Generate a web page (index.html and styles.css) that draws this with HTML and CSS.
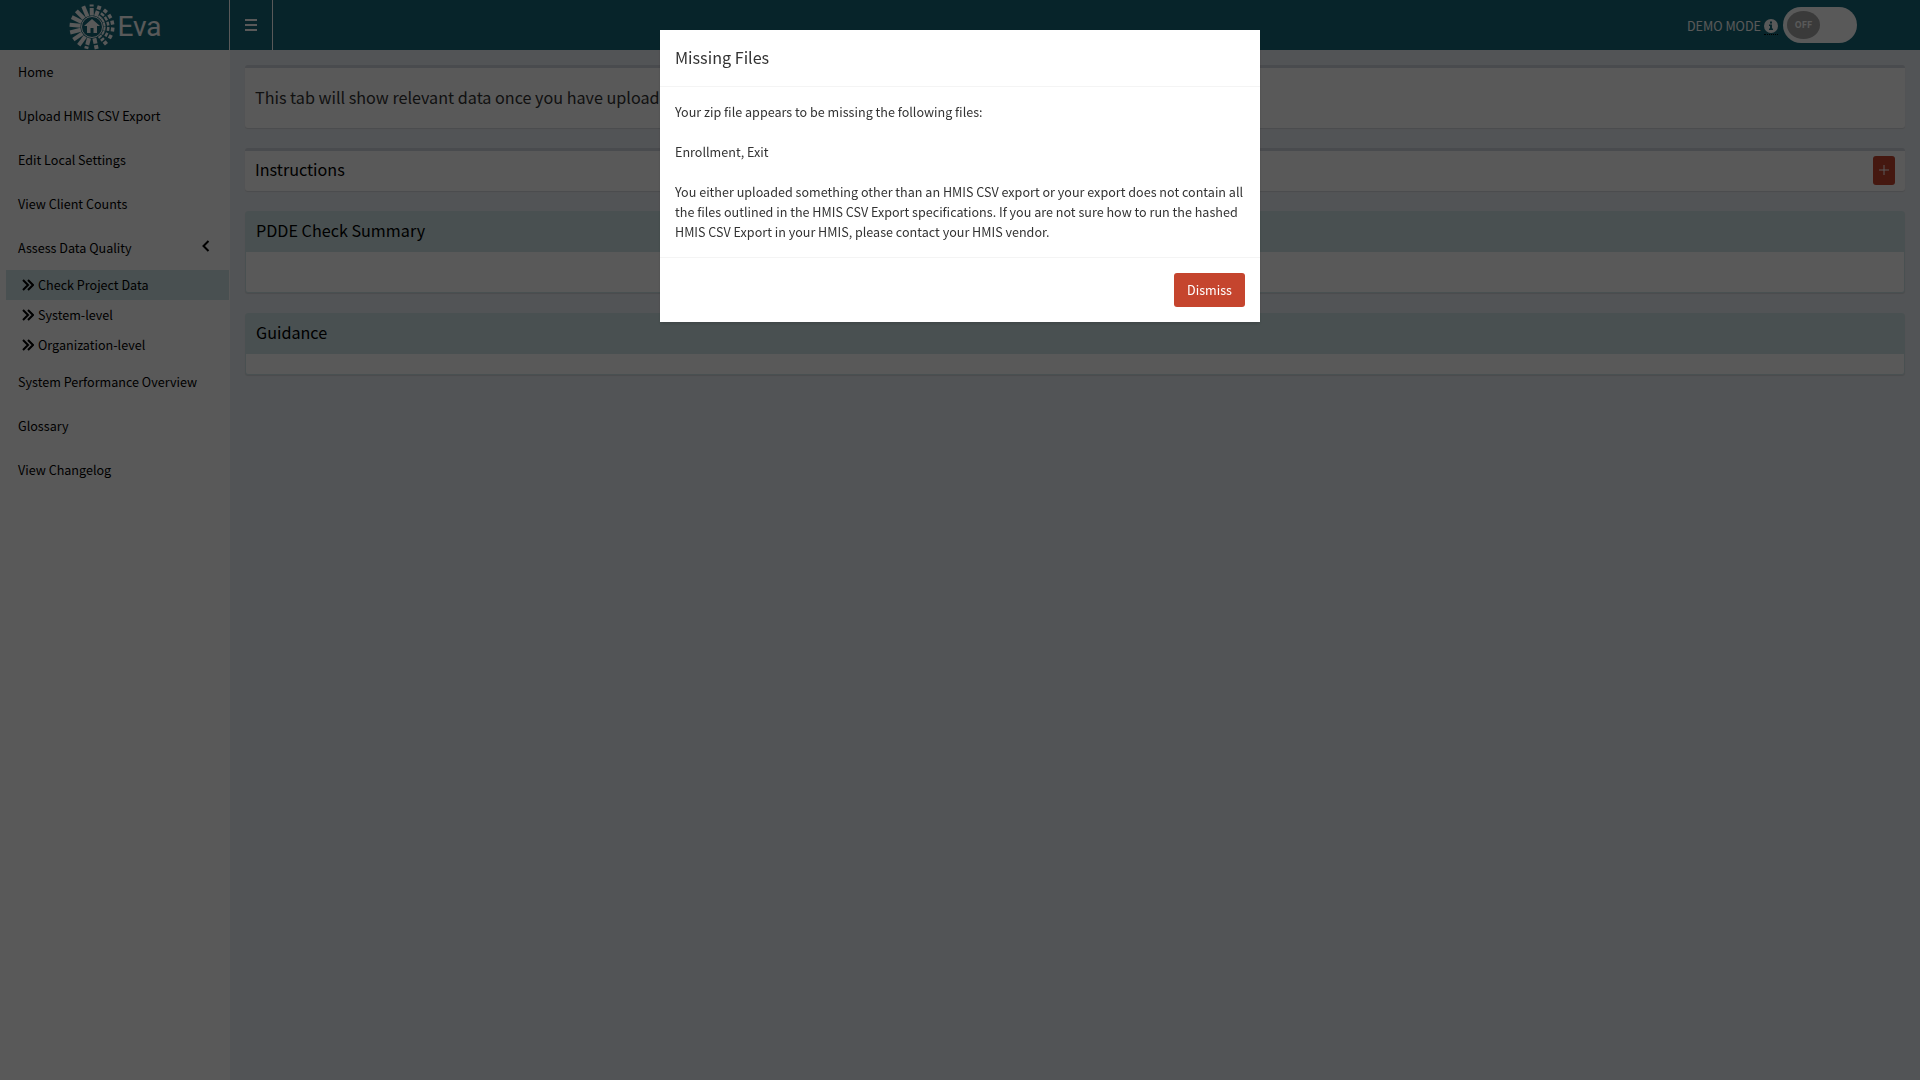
FILE: index.html
```html
<!DOCTYPE html>
<html lang="en">
<head>
<meta charset="utf-8">
<title>Eva</title>
<link rel="stylesheet" href="styles.css">
</head>
<body>
<header class="topbar">
  <a class="logo" href="#">
    <svg class="logo-mark" viewBox="-23 -23 46 46" aria-hidden="true">
      <g fill="none" stroke="currentColor" stroke-width="4">
        <path d="M-11.5 0H-22.500" transform="rotate(6)"/>
        <path d="M-11.5 0H-22.500" transform="rotate(-14)"/>
        <path d="M-11.5 0H-22.500" transform="rotate(-34)"/>
        <path d="M-11.5 0H-22.500" transform="rotate(-54)"/>
        <path d="M-11.5 0H-22.500" transform="rotate(26)"/>
        <path d="M-11.5 0H-22.500" transform="rotate(46)"/>
        <path d="M-11.5 0H-22.500" transform="rotate(67)"/>
        <path d="M-11.5 0H-19M-20.500 0H-22.500" transform="rotate(89)"/>
        <path d="M-11.5 0H-18.500M-20 0H-22.500" transform="rotate(-75)"/>
        <path d="M11.5 0H17M18.500 0H22.500" transform="rotate(-70)"/>
        <path d="M11.5 0H13.500M15 0H17.500M19 0H22.500" transform="rotate(-50)"/>
        <path d="M11.5 0H13.500M15 0H17.500M19 0H22.500" transform="rotate(-31)"/>
        <path d="M11.5 0H13.500M15 0H17.500M19 0H22.500" transform="rotate(-12)"/>
        <path d="M11.5 0H13.500M15 0H17.500M19 0H22.500" transform="rotate(7)"/>
        <path d="M11.5 0H13.500M15 0H17.500M19 0H22.500" transform="rotate(28)"/>
        <path d="M11.5 0H13.500M15 0H17.500M19 0H22.500" transform="rotate(50)"/>
        <path d="M11.5 0H17M18.500 0H22.500" transform="rotate(78)"/>
      </g>
      <circle r="10.5" fill="none" stroke="currentColor" stroke-width="1"/>
      <path fill="currentColor" d="M0-8L8-1H5V6H1.500V1H-1.500V6H-5V-1H-8Z"/>
    </svg>
    <span class="logo-text">Eva</span>
  </a>
  <button class="menu-toggle" type="button" aria-label="Toggle navigation">
    <svg viewBox="0 0 12 12" aria-hidden="true"><path d="M0 1H12M0 6H12M0 11H12" stroke="currentColor" stroke-width="2"/></svg>
  </button>
  <label class="demo">
    <span class="demo-text">DEMO MODE</span>
    <span class="info"><svg viewBox="0 0 14 14" aria-hidden="true"><circle cx="7" cy="7" r="7" fill="currentColor"/><path class="info-i" d="M6 2.500h2v2H6zM5 5.500h3v4h1v1.500H5V9.500h1V7H5z"/></svg></span>
    <span class="switch"><input type="checkbox" class="switch-input"><span class="knob">OFF</span></span>
  </label>
</header>
<div class="layout">
  <nav class="sidebar">
    <a class="item" href="#">Home</a>
    <a class="item" href="#">Upload HMIS CSV Export</a>
    <a class="item" href="#">Edit Local Settings</a>
    <a class="item" href="#">View Client Counts</a>
    <a class="item" href="#">Assess Data Quality
      <svg class="chevron" viewBox="0 0 8 12" aria-hidden="true"><path d="M6.500 1L1.500 6L6.500 11" fill="none" stroke="currentColor" stroke-width="2"/></svg></a>
    <div class="submenu">
      <a class="subitem active" href="#"><svg class="angles" viewBox="0 0 12 12" aria-hidden="true"><path d="M1 1L6 6L1 11M6 1L11 6L6 11" fill="none" stroke="currentColor" stroke-width="2"/></svg>Check Project Data</a>
      <a class="subitem" href="#"><svg class="angles" viewBox="0 0 12 12" aria-hidden="true"><path d="M1 1L6 6L1 11M6 1L11 6L6 11" fill="none" stroke="currentColor" stroke-width="2"/></svg>System-level</a>
      <a class="subitem" href="#"><svg class="angles" viewBox="0 0 12 12" aria-hidden="true"><path d="M1 1L6 6L1 11M6 1L11 6L6 11" fill="none" stroke="currentColor" stroke-width="2"/></svg>Organization-level</a>
    </div>
    <a class="item" href="#">System Performance Overview</a>
    <a class="item" href="#">Glossary</a>
    <a class="item" href="#">View Changelog</a>
  </nav>
  <main class="content">
    <section class="box notice"><p>This tab will show relevant data once you have uploaded your HMIS CSV Export.</p></section>
    <section class="box"><div class="box-header"><h3>Instructions</h3><button class="expand" type="button" aria-label="Expand"><svg viewBox="0 0 10 10" aria-hidden="true"><path d="M5 0V10M0 5H10" stroke="currentColor" stroke-width="1"/></svg></button></div></section>
    <section class="box solid"><div class="box-header"><h3>PDDE Check Summary</h3></div><div class="box-body tall"></div></section>
    <section class="box solid"><div class="box-header"><h3>Guidance</h3></div><div class="box-body"></div></section>
  </main>
</div>
<div class="backdrop">
  <div class="modal" role="dialog" aria-modal="true" aria-labelledby="modal-title">
    <div class="modal-header"><h4 id="modal-title">Missing Files</h4></div>
    <div class="modal-body">
      <p>Your zip file appears to be missing the following files:</p>
      <p>Enrollment, Exit</p>
      <p>You either uploaded something other than an HMIS CSV export or your export does not contain all the files outlined in the HMIS CSV Export specifications. If you are not sure how to run the hashed HMIS CSV Export in your HMIS, please contact your HMIS vendor.</p>
    </div>
    <div class="modal-footer"><button class="dismiss" type="button">Dismiss</button></div>
  </div>
</div>
</body>
</html>
```
FILE: styles.css
```css
* { box-sizing: border-box; }
body {
  margin: 0;
  min-height: 100vh;
  display: flex;
  flex-direction: column;
  background: #ecf0f5;
  color: #333;
  font: 14px/20px "Source Sans Pro", "Noto Sans CJK SC", sans-serif;
  /* x-height ratio of Source Sans, so the fallback face sets at the same size */
  font-size-adjust: 0.488;
}
h3, h4, p { margin: 0; font-weight: 400; }
a { color: inherit; text-decoration: none; }
button { font: inherit; font-size-adjust: inherit; border: 0; padding: 0; cursor: pointer; }
svg { display: block; }

.topbar { display: flex; height: 50px; background: #16697a; color: #fff; }
.logo {
  display: flex; align-items: center; justify-content: center; gap: 2px;
  width: 230px; padding-left: 2px; border-right: 1px solid #fff;
}
.logo-mark { width: 46px; height: 46px; margin-top: 3px; }
.logo-text { padding-top: 3px; font: 400 28px/50px Roboto, sans-serif; font-size-adjust: none; }
.menu-toggle {
  display: grid; place-items: center; width: 43px;
  background: none; color: #fff; border-right: 1px solid #fff;
}
.menu-toggle svg { width: 12px; height: 12px; }
.demo { display: flex; align-items: center; margin-left: auto; padding-right: 63px; }
.demo-text { padding-top: 2px; }
.info { margin: 2px 5px 0 3px; padding: 1px 0; border-bottom: 1px dotted #000; }
.info svg { width: 14px; height: 14px; }
.info-i { fill: #16697a; }
.switch {
  display: flex; align-items: center; width: 74px; height: 36px;
  padding: 4px; border-radius: 18px; background: #fff;
}
.switch-input { appearance: none; width: 0; height: 0; margin: 0; }
.knob {
  width: 33px; height: 28px; border-radius: 50%; background: #a5a5a5;
  color: #fff; font-size: 10px; font-weight: 700; line-height: 28px; text-align: center;
}

.layout { display: flex; flex: 1; }
.sidebar { width: 230px; flex: none; background: #fff; color: #000; }
.item {
  display: flex; align-items: center; justify-content: space-between;
  height: 44px; padding: 0 20px 0 18px;
}
.chevron { width: 8px; height: 12px; margin-bottom: 4px; }
.submenu { padding: 0 1px 0 6px; }
.subitem { display: flex; align-items: center; gap: 4px; height: 30px; padding-left: 16px; }
.subitem.active { background: #d0e6e8; }
.angles { width: 12px; height: 12px; }

.content { flex: 1; display: flex; flex-direction: column; gap: 20px; padding: 15px; }
.box {
  background: #fff; border-top: 3px solid #d2d6de; border-radius: 3px;
  box-shadow: 0 1px 1px rgba(0, 0, 0, 0.1); font-size: 18px;
}
.notice { padding: 19px 10px 21px; }
.box-header {
  display: flex; align-items: center; justify-content: space-between;
  height: 40px; padding: 0 10px 2px; color: #000;
}
.box-header h3 { padding-bottom: 2px; font-size: 18px; }
.expand {
  display: grid; place-items: center; width: 22px; height: 29px;
  border-radius: 3px; background: #c5452e; color: #fff;
}
.expand svg { width: 10px; height: 10px; }
.solid { border: 1px solid #d0e6e8; }
.solid .box-header { background: #d0e6e8; }
.box-body { height: 20px; }
.tall { height: 40px; }

.backdrop { position: fixed; inset: 0; padding: 30px 20px; background: rgba(0, 0, 0, 0.65); }
.modal {
  max-width: 600px; margin: 0 auto; background: #fff;
  box-shadow: 0 2px 3px rgba(0, 0, 0, 0.125);
}
.modal-header { padding: 15px 15px 17px; border-bottom: 1px solid #f4f4f4; }
.modal-header h4 { font-size: 18px; line-height: 24px; }
.modal-body { display: grid; gap: 20px; padding: 15px; }
.modal-footer { display: flex; justify-content: flex-end; padding: 15px; border-top: 1px solid #f4f4f4; }
.dismiss { height: 34px; padding: 0 13px; border-radius: 3px; background: #c5452e; color: #fff; }
```
